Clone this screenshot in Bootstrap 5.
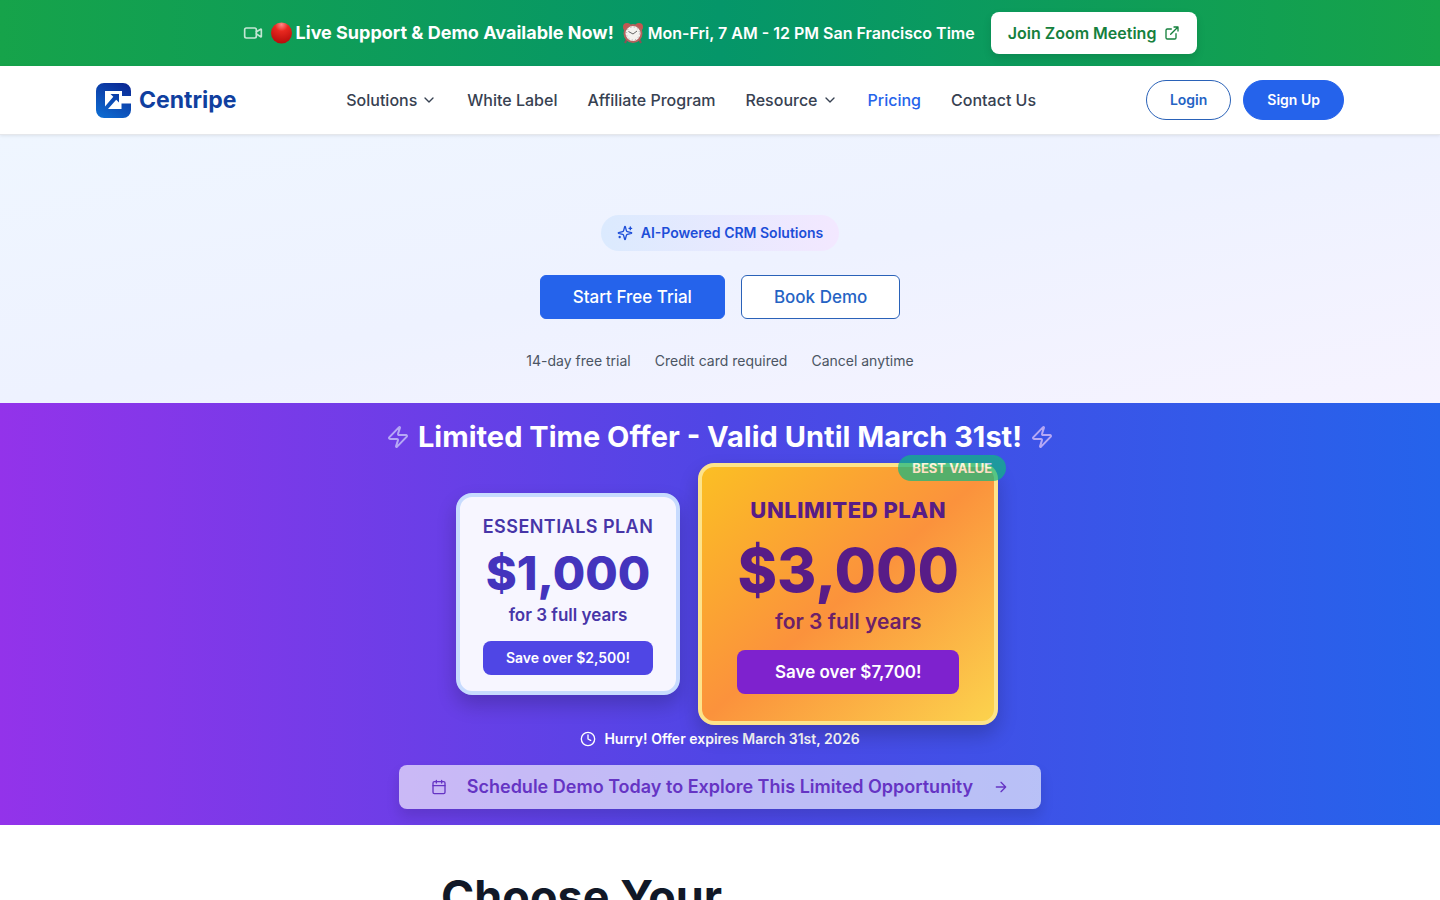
<!DOCTYPE html>
<html lang="en">
<head>
<meta charset="utf-8">
<meta name="viewport" content="width=device-width, initial-scale=1">
<title>Centripe Pricing</title>
<link href="https://cdn.jsdelivr.net/npm/bootstrap@5.3.0/dist/css/bootstrap.min.css" rel="stylesheet">
<style>
body { font-family: Inter, "Liberation Sans", sans-serif; color: #111827; overflow-x: hidden; }
a { text-decoration: none; }
svg { flex-shrink: 0; }
.ico { fill: none; stroke: currentColor; stroke-width: 2; stroke-linecap: round; stroke-linejoin: round; }
.page-wrap { max-width: 1280px; }
.live-bar { background: linear-gradient(90deg, #16a34a, #059669 50%, #16a34a); padding: 12px 16px; }
.live-title { font-size: 18px; line-height: 28px; }
.live-hours { font-size: 16px; line-height: 24px; }
.btn-zoom { --bs-btn-bg: #fff; --bs-btn-color: #15803d; --bs-btn-hover-bg: #f0fdf4; --bs-btn-hover-color: #15803d; --bs-btn-font-weight: 600; --bs-btn-padding-x: 16px; --bs-btn-padding-y: 8px; border-radius: 8px; line-height: 24px; box-shadow: 0 4px 8px rgba(0,0,0,.12); }
.site-nav { background: #fff; border-bottom: 1px solid #e5e7eb; padding: 14px 16px; min-height: 69px; box-shadow: 0 1px 3px rgba(0,0,0,.08); position: relative; }
.brand-name { font-size: 23px; line-height: 32px; font-weight: 700; color: #103f9f; }
.main-menu { column-gap: 30px; }
.menu-link { color: #374151; font-size: 16px; line-height: 24px; font-weight: 500; }
.menu-link.active { color: #2563eb; }
.btn-pair { gap: 12px; }
.btn-round { border-radius: 20px; font-size: 14px; line-height: 20px; --bs-btn-font-weight: 600; --bs-btn-padding-x: 23px; --bs-btn-padding-y: 9px; }
.btn-blue { --bs-btn-bg: #2563eb; --bs-btn-border-color: #2563eb; --bs-btn-color: #fff; --bs-btn-hover-bg: #1d4ed8; --bs-btn-hover-color: #fff; }
.btn-line { --bs-btn-bg: #fff; --bs-btn-border-color: #2a62b8; --bs-btn-color: #2563c4; --bs-btn-hover-bg: #eff6ff; --bs-btn-hover-color: #1d4ed8; }
.hero { background: linear-gradient(to bottom right, #eff6ff, #eef2ff 50%, #f6f3ff); padding: 80px 16px 32px; }
.ai-pill { background: linear-gradient(90deg, #dbeafe, #f3e8ff); color: #1d4ed8; font-size: 14px; line-height: 20px; font-weight: 600; border-radius: 18px; padding: 8px 16px; }
.btn-cta { font-size: 17px; line-height: 28px; border-radius: 6px; --bs-btn-font-weight: 500; --bs-btn-padding-x: 32px; --bs-btn-padding-y: 7px; }
.hero-notes { font-size: 14px; line-height: 20px; color: #4b5563; margin-top: 32px; }
.offer { background: linear-gradient(90deg, #9333ea, #4f46e5 50%, #2563eb); padding: 16px; color: #fff; }
.offer-title { font-size: 29px; line-height: 36px; font-weight: 700; }
.bolt { color: #b6a8f5; }
.plan-row { gap: 18px; margin-top: 8px; padding-left: 14px; }
.plan { min-width: 224px; border: 4px solid #c7dbfe; border-radius: 16px; padding: 16px 23px; background: #f7f6ff; color: #4338ca; text-align: center; box-shadow: 0 10px 20px rgba(0,0,0,.2); }
.plan-name { font-size: 18px; line-height: 28px; font-weight: 600; letter-spacing: 0.025em; margin: 0 0 8px; color: #4735a8; }
.plan-price { font-size: 47px; line-height: 48px; font-weight: 800; color: #4434bd; }
.plan-term { font-size: 17px; line-height: 28px; font-weight: 600; margin: 4px 0 12px; color: #4735a8; }
.plan-save { font-size: 14px; line-height: 20px; font-weight: 600; color: #fff; background: #4f46e5; border-radius: 8px; padding: 7px 16px; }
.plan-best { min-width: 300px; position: relative; border-color: #fde38a; padding: 27px 35px; background: linear-gradient(to bottom right, #fbbf24, #fb923c 50%, #fcd34d); }
.plan-best .plan-name { font-size: 22px; line-height: 32px; font-weight: 800; margin-bottom: 12px; color: #581c87; }
.plan-best .plan-price { font-size: 60px; line-height: 64px; color: #581c87; }
.plan-best .plan-term { font-size: 21px; line-height: 32px; color: #6b2169; }
.plan-best .plan-save { font-size: 17px; line-height: 28px; padding: 8px 32px; background: #7e22ce; }
.best-tag { position: absolute; top: -12px; right: -12px; background: #10b981; opacity: .7; color: #fff; font-size: 13px; line-height: 20px; font-weight: 700; border-radius: 13px; padding: 3px 14px; }
.hurry { font-size: 14px; line-height: 20px; font-weight: 600; margin: 4px 0 16px; }
.btn-schedule { --bs-btn-bg: rgba(255,255,255,.64); --bs-btn-color: #6534c4; --bs-btn-hover-bg: rgba(255,255,255,.8); --bs-btn-hover-color: #6534c4; --bs-btn-font-weight: 600; --bs-btn-padding-x: 32px; --bs-btn-padding-y: 8px; gap: 20px; font-size: 18px; line-height: 28px; border: 0; border-radius: 8px; box-shadow: 0 8px 14px rgba(0,0,0,.12); }
.choose { padding: 48px 16px; }
.choose-title { font-size: 45px; line-height: 48px; font-weight: 700; max-width: 558px; margin: 0 auto; }
</style>
</head>
<body>
<aside class="live-bar d-flex flex-wrap justify-content-center align-items-center text-white">
  <svg class="ico me-2 opacity-75" width="20" height="20" viewBox="0 0 24 24"><path d="m16 13 5.223 3.482a.5.5 0 0 0 .777-.416V7.870a.5.5 0 0 0-.752-.432L16 10.500"/><rect x="2" y="6" width="14" height="12" rx="2"/></svg>
  <svg class="me-1" width="21" height="22" viewBox="0 0 21 22"><defs><radialGradient id="red" cx=".5" cy=".1" r=".9"><stop offset="0" stop-color="#f88"/><stop offset=".35" stop-color="#e8281f"/><stop offset="1" stop-color="#b70b0b"/></radialGradient></defs><circle cx="10.500" cy="11" r="10.500" fill="url(#red)"/></svg>
  <strong class="live-title fw-bold">Live Support &amp; Demo Available Now!</strong>
  <svg class="ms-2 me-1" width="22" height="22" viewBox="0 0 22 22"><path d="M5 17l-2 4M17 17l2 4" stroke="#8a5055" stroke-width="2"/><circle cx="5" cy="5" r="4" fill="#c55650"/><circle cx="17" cy="5" r="4" fill="#c55650"/><circle cx="11" cy="11.500" r="8.500" fill="#f4f2ef" stroke="#b5625e" stroke-width="2"/><circle cx="11" cy="11.500" r="6.500" fill="none" stroke="#aaa" stroke-width="1" stroke-dasharray="1 2.400"/><path d="M6.500 9.500l4.500 2.500 4-3" fill="none" stroke="#666"/></svg>
  <span class="live-hours fw-semibold me-3">Mon-Fri, 7 AM - 12 PM San Francisco Time</span>
  <a class="btn btn-zoom d-inline-flex align-items-center gap-2" href="#">Join Zoom Meeting <svg class="ico" width="16" height="16" viewBox="0 0 24 24"><path d="M15 3h6v6M10 14 21 3M18 13v6a2 2 0 0 1-2 2H5a2 2 0 0 1-2-2V8a2 2 0 0 1 2-2h6"/></svg></a>
</aside>

<header class="site-nav">
  <div class="page-wrap mx-auto px-md-3 d-flex flex-wrap justify-content-between align-items-center">
    <a class="d-flex align-items-center gap-2" href="#">
      <svg width="35" height="35" viewBox="0 0 35 35"><defs><linearGradient id="lg" gradientUnits="userSpaceOnUse" x1="26" y1="0" x2="8" y2="35"><stop offset="0" stop-color="#0b2a96"/><stop offset="1" stop-color="#0d6ad0"/></linearGradient></defs><path fill="url(#lg)" fill-rule="evenodd" d="M8 0h19a8 8 0 0 1 8 8v5h-9V8H9v18h16.500v-5.500H35V27a8 8 0 0 1-8 8H8a8 8 0 0 1-8-8V8a8 8 0 0 1 8-8z"/><path fill="url(#lg)" d="M14.500 11H23v8.500l-2.800-2.800L12 26H9v-2.500l8.300-9.700z"/></svg>
      <span class="brand-name">Centripe</span>
    </a>
    <nav class="main-menu d-flex flex-wrap" aria-label="Main">
      <a class="menu-link d-flex align-items-center gap-1" href="#">Solutions <svg class="ico" width="16" height="16" viewBox="0 0 24 24"><path d="m6 9 6 6 6-6"/></svg></a>
      <a class="menu-link" href="#">White Label</a>
      <a class="menu-link" href="#">Affiliate Program</a>
      <a class="menu-link d-flex align-items-center gap-1" href="#">Resource <svg class="ico" width="16" height="16" viewBox="0 0 24 24"><path d="m6 9 6 6 6-6"/></svg></a>
      <a class="menu-link active" href="#" aria-current="page">Pricing</a>
      <a class="menu-link" href="#">Contact Us</a>
    </nav>
    <div class="d-flex btn-pair">
      <button class="btn btn-round btn-line" type="button">Login</button>
      <button class="btn btn-round btn-blue" type="button">Sign Up</button>
    </div>
  </div>
</header>

<main>
  <section class="hero d-flex flex-column align-items-center">
    <div class="ai-pill d-inline-flex align-items-center gap-2 mb-4">
      <svg class="ico" width="16" height="16" viewBox="0 0 24 24"><path d="M9.937 15.500A2 2 0 0 0 8.500 14.063l-6.135-1.582a.5.5 0 0 1 0-.962L8.500 9.936A2 2 0 0 0 9.937 8.500l1.582-6.135a.5.5 0 0 1 .963 0L14.063 8.500A2 2 0 0 0 15.500 9.937l6.135 1.581a.5.5 0 0 1 0 .964L15.500 14.063a2 2 0 0 0-1.437 1.437l-1.582 6.135a.5.5 0 0 1-.963 0zM20 3v4M22 5h-4M4 17v2M5 18H3"/></svg>
      AI-Powered CRM Solutions
    </div>
    <div class="d-flex flex-wrap gap-3">
      <button class="btn btn-cta btn-blue" type="button">Start Free Trial</button>
      <button class="btn btn-cta btn-line" type="button">Book Demo</button>
    </div>
    <div class="hero-notes d-flex flex-wrap column-gap-4"><span>14-day free trial</span><span>Credit card required</span><span>Cancel anytime</span></div>
  </section>

  <section class="offer d-flex flex-column align-items-center">
    <div class="d-flex align-items-center gap-2">
      <svg class="ico bolt" width="24" height="24" viewBox="0 0 24 24"><path d="M4 14a1 1 0 0 1-.78-1.630l9.900-10.200a.5.5 0 0 1 .86.460l-1.920 6.020A1 1 0 0 0 13 10h7a1 1 0 0 1 .78 1.630l-9.900 10.200a.5.5 0 0 1-.86-.460l1.920-6.020A1 1 0 0 0 11 14z"/></svg>
      <h2 class="offer-title m-0">Limited Time Offer - Valid Until March 31st!</h2>
      <svg class="ico bolt" width="24" height="24" viewBox="0 0 24 24"><path d="M4 14a1 1 0 0 1-.78-1.630l9.900-10.200a.5.5 0 0 1 .86.460l-1.920 6.020A1 1 0 0 0 13 10h7a1 1 0 0 1 .78 1.630l-9.900 10.200a.5.5 0 0 1-.86-.460l1.920-6.020A1 1 0 0 0 11 14z"/></svg>
    </div>
    <div class="plan-row d-flex flex-wrap justify-content-center align-items-center">
      <article class="plan">
        <h3 class="plan-name">ESSENTIALS PLAN</h3>
        <div class="plan-price">$1,000</div>
        <p class="plan-term">for 3 full years</p>
        <div class="plan-save">Save over $2,500!</div>
      </article>
      <article class="plan plan-best">
        <h3 class="plan-name">UNLIMITED PLAN</h3>
        <div class="plan-price">$3,000</div>
        <p class="plan-term">for 3 full years</p>
        <div class="plan-save">Save over $7,700!</div>
        <span class="best-tag">BEST VALUE</span>
      </article>
    </div>
    <div class="hurry d-flex align-items-center gap-2">
      <svg class="ico" width="16" height="16" viewBox="0 0 24 24"><circle cx="12" cy="12" r="10"/><path d="M12 6v6l4 2"/></svg>
      Hurry! Offer expires March 31st, 2026
    </div>
    <button class="btn btn-schedule d-flex align-items-center" type="button">
      <svg class="ico" width="16" height="16" viewBox="0 0 24 24"><path d="M8 2v4M16 2v4M3 10h18"/><rect x="3" y="4" width="18" height="18" rx="2"/></svg>
      <span>Schedule Demo Today to Explore This Limited Opportunity</span>
      <svg class="ico" width="16" height="16" viewBox="0 0 24 24"><path d="M5 12h14M12 5l7 7-7 7"/></svg>
    </button>
  </section>

  <section class="choose">
    <h1 class="choose-title">Choose Your</h1>
  </section>
</main>
<script src="https://cdn.jsdelivr.net/npm/bootstrap@5.3.0/dist/js/bootstrap.bundle.min.js"></script>
</body>
</html>
